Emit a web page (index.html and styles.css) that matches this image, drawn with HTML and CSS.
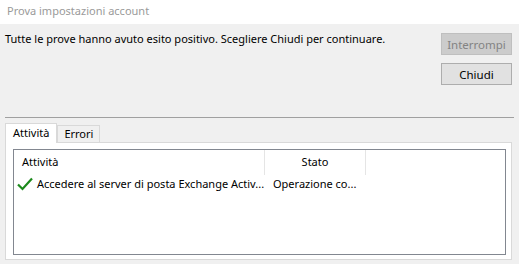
FILE: index.html
```html
<!DOCTYPE html>
<html lang="it">
<head>
    <meta charset="UTF-8">
    <title>Prova impostazioni account</title>
    <link rel="stylesheet" href="styles.css">
</head>
<body>
<div class="window">
    <div class="titlebar">Prova impostazioni account</div>
    <div class="main">
        <p class="message">Tutte le prove hanno avuto esito positivo. Scegliere Chiudi per continuare.</p>
        <div class="buttons">
            <button class="btn" disabled>Interrompi</button>
            <button class="btn">Chiudi</button>
        </div>
    </div>
    <div class="sep"></div>
    <div class="tabs">
        <span class="tab current">Attività</span>
        <span class="tab">Errori</span>
    </div>
    <div class="panel">
        <div class="list">
            <div class="row head">
                <span class="cell task">Attività</span>
                <span class="cell state">Stato</span>
            </div>
            <div class="row">
                <span class="cell task">
                    <svg class="check" width="16" height="14" viewBox="0 0 16 14">
                        <path d="M1 7.5 L5.5 12 L15 1.5" fill="none" stroke="#1c8a1c" stroke-width="2.2"/>
                    </svg>
                    <span>Accedere al server di posta Exchange Activ...</span>
                </span>
                <span class="cell state">Operazione co...</span>
            </div>
        </div>
    </div>
</div>
</body>
</html>
```

FILE: styles.css
```css
* {
    margin: 0;
    padding: 0;
    box-sizing: border-box;
}

body {
    background-color: #f0f0f0;
    font-family: "Noto Sans", "Liberation Sans", sans-serif;
    font-size: 11px;
    color: #000;
}

.window {
    width: 519px;
    height: 264px;
}

.titlebar {
    height: 24px;
    line-height: 22px;
    padding-left: 7px;
    background-color: #fff;
    color: #9a9a9a;
}

.main {
    display: flex;
    height: 93px;
    padding: 7px 7px 0 5px;
}

.message {
    line-height: 16px;
}

.buttons {
    display: flex;
    flex-direction: column;
    gap: 8px;
    margin-left: auto;
    padding-top: 2px;
}

.btn {
    width: 71px;
    height: 22px;
    font: inherit;
    font-size: 11.5px;
    color: #000;
    background-color: #e1e1e1;
    border: 1px solid #adadad;
}

.btn:disabled {
    color: #838383;
    background-color: #cccccc;
    border-color: #bfbfbf;
}

.sep {
    margin: 0 5px;
    border-top: 1px solid #a0a0a0;
}

.tabs {
    display: flex;
    align-items: flex-end;
    margin: 5px 0 0 5px;
    height: 19px;
}

.tab {
    height: 17px;
    line-height: 15px;
    padding: 0 6px;
    border: 1px solid #d9d9d9;
    border-bottom: none;
    background-color: #f0f0f0;
}

.tab.current {
    position: relative;
    height: 20px;
    line-height: 18px;
    margin-bottom: -1px;
    padding: 0 7px;
    background-color: #fff;
}

.panel {
    height: 118px;
    margin: 0 7px 0 5px;
    padding: 6px 5px 4px 7px;
    background-color: #fff;
    border: 1px solid #d9d9d9;
}

.list {
    height: 100%;
    border: 1px solid #828790;
    background-color: #fff;
}

.row {
    display: flex;
    height: 18px;
    line-height: 18px;
}

.row.head {
    height: 25px;
    line-height: 24px;
}

.cell {
    white-space: nowrap;
    overflow: hidden;
}

.task {
    width: 251px;
    padding-left: 8px;
}

.state {
    width: 101px;
    padding-left: 8px;
}

.head .cell {
    border-right: 1px solid #e5e5e5;
}

.head .state {
    text-align: center;
    padding-left: 0;
}

.row .task {
    display: flex;
    align-items: center;
    padding-left: 3px;
}

.head .task {
    display: block;
    padding-left: 8px;
}

.check {
    flex: none;
    margin-right: 4px;
}
```
